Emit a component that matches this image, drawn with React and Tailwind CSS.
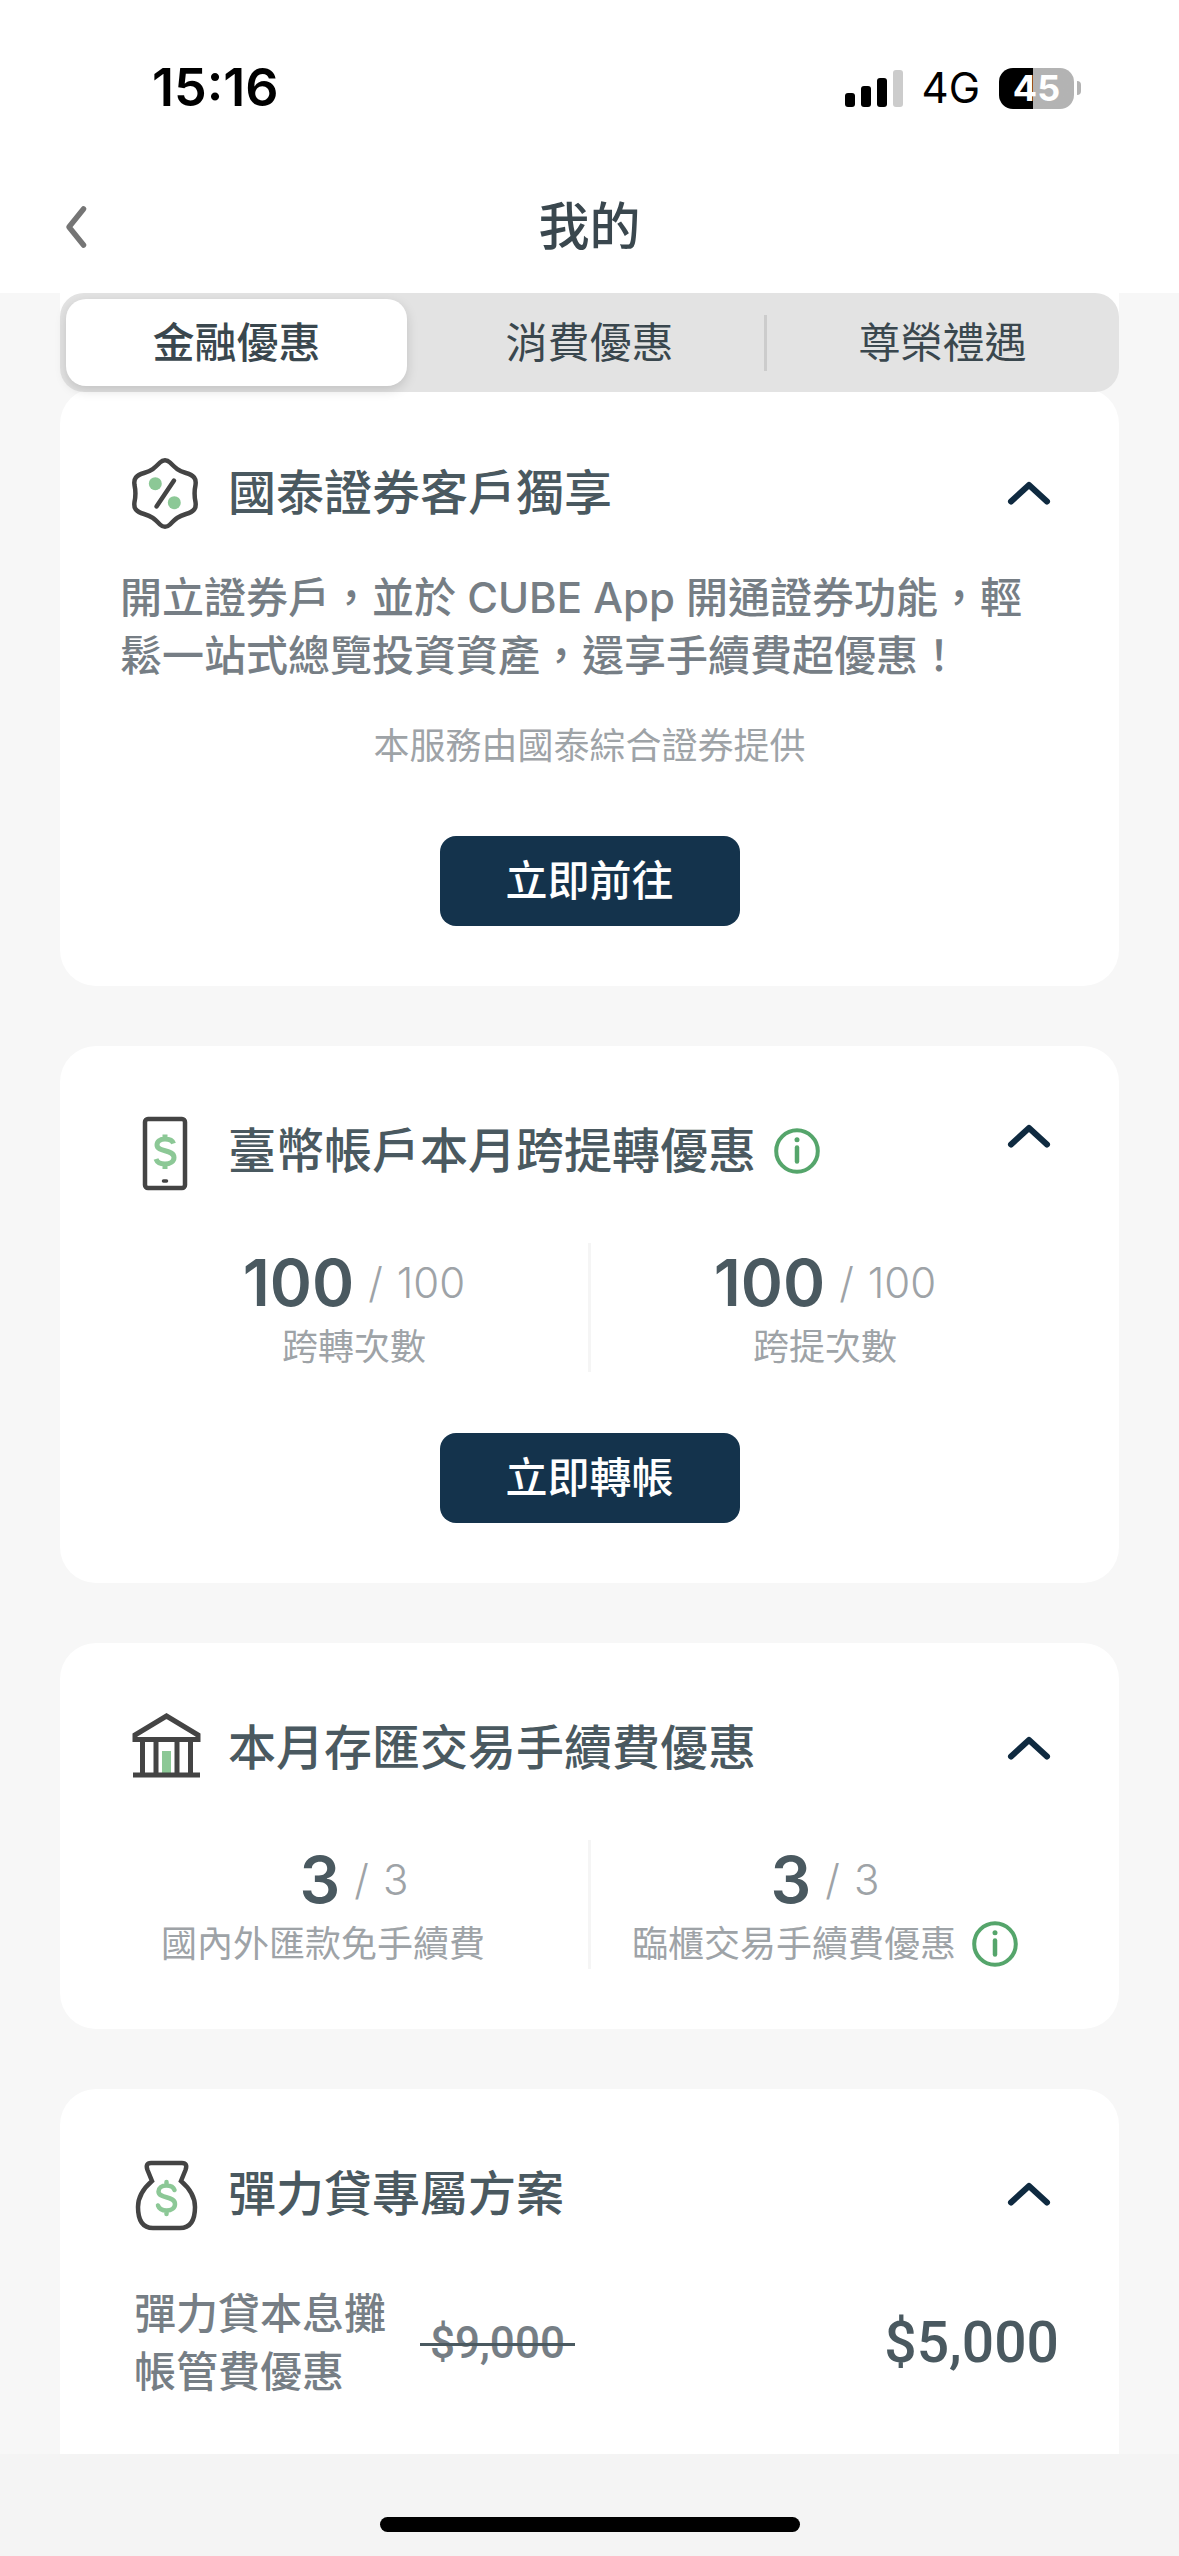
import { useState } from "react";

const FONT = "font-['Inter','Noto_Sans_CJK_TC',sans-serif]";

const tabs = ["金融優惠", "消費優惠", "尊榮禮遇"];

/* ICONS */
function PercentIcon() {
  return (
    <svg width="74" height="74" viewBox="0 0 74 74" fill="none" aria-hidden="true">
      <path
        d="M32 6.5C35 3.5 39 3.5 42 6.5C48 12.5 50 14.5 58 17C66 19.5 68.5 22.5 67.5 29C66 36 66 39 67.5 46C68.5 52.5 66 55.5 58 58C50 60.5 48 62.5 42 68.5C39 71.5 35 71.5 32 68.5C26 62.5 24 60.5 16 58C8 55.5 5.5 52.5 6.5 46C8 39 8 36 6.5 29C5.5 22.5 8 19.5 16 17C24 14.5 26 12.5 32 6.5Z"
        stroke="#444444"
        strokeWidth="4.5"
        strokeLinejoin="round"
      />
      <circle cx="27.3" cy="27.7" r="6.5" fill="#8cc896" />
      <circle cx="46.3" cy="46.7" r="6.5" fill="#8cc896" />
      <path d="M46 24.5L28.5 50.5" stroke="#444444" strokeWidth="4.5" strokeLinecap="round" />
    </svg>
  );
}

function PhoneIcon() {
  return (
    <svg width="74" height="74" viewBox="0 0 74 74" fill="none" aria-hidden="true" className="overflow-visible">
      <rect x="17" y="5" width="40" height="69" rx="3" stroke="#444444" strokeWidth="4.5" />
      <path
        d="M45.5 29.5C44.5 26.5 41.5 25 37 25C32 25 29 27.5 29 31C29 38.5 46 35 46 43.5C46 47.5 42 50 37 50C32 50 29 48 28 45M37 20.5V25M37 50V55"
        stroke="#8cc896"
        strokeWidth="5"
      />
      <path d="M35.5 67H38.5" stroke="#444444" strokeWidth="3.5" strokeLinecap="round" />
    </svg>
  );
}

function BankIcon() {
  return (
    <svg width="74" height="74" viewBox="0 0 74 74" fill="none" aria-hidden="true">
      <path d="M7 28.5V24L38.5 5L70 24V28.5Z" stroke="#444444" strokeWidth="5" />
      <path d="M14.5 29V65M28 29V65M49 29V65M62.5 29V65" stroke="#444444" strokeWidth="5" />
      <rect x="34" y="40" width="9" height="22" fill="#8cc896" />
      <path d="M5 64H72" stroke="#444444" strokeWidth="5" />
    </svg>
  );
}

function MoneyBagIcon() {
  return (
    <svg width="74" height="74" viewBox="0 0 74 74" fill="none" aria-hidden="true">
      <path
        d="M24 24L19.5 13Q17 6 23 6H54Q60 6 57.5 13L53 24Q67 36 67 50Q67 71 52 71H25Q10 71 10 50Q10 36 24 24Z"
        stroke="#444444"
        strokeWidth="4.5"
      />
      <path
        d="M46.5 33C45.5 30 42.5 28.5 38.5 28.5C33.5 28.5 30.5 31 30.5 34.5C30.5 42 47 38.5 47 47C47 51 43.5 53.5 38.5 53.5C34 53.5 31 51.5 30 48.5M38.5 25V28.5M38.5 53.5V57"
        stroke="#8cc896"
        strokeWidth="4.5"
        strokeLinecap="round"
      />
    </svg>
  );
}

function InfoButton({ label }) {
  return (
    <button type="button" aria-label={label} className="shrink-0 cursor-pointer">
      <svg width="46" height="46" viewBox="0 0 46 46" fill="none">
        <circle cx="23" cy="23" r="20.8" stroke="#55a56b" strokeWidth="4" />
        <circle cx="23" cy="11.8" r="2.5" fill="#55a56b" />
        <path d="M23 19.5V33.5" stroke="#55a56b" strokeWidth="4.5" strokeLinecap="round" />
      </svg>
    </button>
  );
}

function StatusBar() {
  return (
    <div className="flex items-center justify-between pt-14 pr-24.5 pl-38 text-black">
      <span className="text-[52px] leading-16 font-semibold">15:16</span>
      <div className="flex items-center gap-[19px]">
        <svg width="58" height="38" viewBox="0 0 58 38" aria-hidden="true">
          <rect x="0" y="24" width="10" height="14" rx="3" />
          <rect x="16" y="17" width="10" height="21" rx="3" />
          <rect x="32" y="9" width="10" height="29" rx="3" />
          <rect x="48" y="1" width="10" height="37" rx="3" fill="#cccccc" />
        </svg>
        <span className="text-[42px] leading-12">4G</span>
        <div className="flex items-center gap-[3px]">
          <div className="flex h-[41px] w-[75px] items-center justify-center rounded-[14px] bg-linear-to-r from-black from-45% to-[#b3b3b3] to-45% text-4xl leading-10 font-bold text-white">
            45
          </div>
          <div className="h-3.5 w-1 rounded-r-full bg-[#b3b3b3]" />
        </div>
      </div>
    </div>
  );
}

function Card({ icon, title, info, raised, children }) {
  const [open, setOpen] = useState(true);

  return (
    <section className="rounded-[36px] bg-white px-15 pt-17 pb-15">
      <div className="flex items-center px-2">
        {icon}
        <h2 className="ml-6.5 text-5xl leading-16 font-medium text-[#4a5960]">{title}</h2>
        {info && (
          <div className="ml-4.5 flex">
            <InfoButton label={title} />
          </div>
        )}
        <button
          type="button"
          aria-label={title}
          aria-expanded={open}
          onClick={() => setOpen(!open)}
          className={`ml-auto cursor-pointer ${raised ? "self-start" : ""}`}
        >
          <svg width="44" height="44" viewBox="0 0 44 44" fill="none" className={open ? "" : "rotate-180"}>
            <path d="M4 30.5L22 14L40 30.5" stroke="#0f2a40" strokeWidth="6" strokeLinecap="round" strokeLinejoin="round" />
          </svg>
        </button>
      </div>
      {open && children}
    </section>
  );
}

function Stat({ used, total, label, info, infoSlot }) {
  return (
    <div className="flex flex-1 flex-col items-center">
      <div className="flex items-center gap-3.5 text-[42px] leading-[79px] font-light text-[#9ea3a7]">
        <span className="text-[64px] font-semibold text-[#4a5960]">{used}</span>
        <span>/</span>
        <span>{total}</span>
      </div>
      <div className="flex items-center gap-4 text-4xl leading-[50px] whitespace-nowrap text-[#9ea3a7]">
        {label}
        {info && <InfoButton label={label} />}
        {infoSlot && <div className="w-11.5" />}
      </div>
    </div>
  );
}

function Stats({ items }) {
  return (
    <div className="mt-[55px] flex divide-x-3 divide-[#f5f5f5]">
      {items.map((item) => (
        <Stat key={item.label} {...item} />
      ))}
    </div>
  );
}

function PrimaryButton({ children }) {
  return (
    <button
      type="button"
      className="mx-auto mt-[61px] block h-[90px] w-75 cursor-pointer rounded-2xl bg-[#14334c] text-[42px] leading-15 font-medium text-white"
    >
      {children}
    </button>
  );
}

function App() {
  const [activeTab, setActiveTab] = useState(0);

  return (
    <div className={`flex h-screen flex-col bg-[#f7f7f7] ${FONT}`}>
      {/* HEADER */}
      <header className="bg-white">
        <StatusBar />
        <div className="flex h-[173px] items-center justify-between px-15 pt-16 pb-6">
          <button type="button" aria-label="返回" className="cursor-pointer">
            <svg width="32" height="48" viewBox="0 0 32 48" fill="none">
              <path d="M23.5 6L9 24L23.5 42" stroke="#757575" strokeWidth="5.5" strokeLinecap="round" strokeLinejoin="round" />
            </svg>
          </button>
          <h1 className="text-[51px] leading-16 font-medium text-[#3a474e]">我的</h1>
          <div className="w-8" />
        </div>
      </header>

      <main className="flex-1 overflow-y-auto px-15 [scrollbar-width:none]">
        {/* TABS */}
        <div className="sticky top-0 z-10 bg-linear-to-b from-white from-50% to-transparent to-50%">
          <div role="tablist" className="flex h-[99px] rounded-3xl bg-[#e3e3e3]">
            {tabs.map((tab, idx) => (
              <div key={tab} className="flex flex-1 items-center">
                <button
                  type="button"
                  role="tab"
                  aria-selected={activeTab === idx}
                  onClick={() => setActiveTab(idx)}
                  className={`mx-1.5 h-[87px] flex-1 cursor-pointer rounded-[20px] text-[42px] leading-15 text-[#3a474e] ${
                    activeTab === idx ? "bg-white font-medium shadow-[0_4px_12px_rgba(0,0,0,0.15)]" : ""
                  }`}
                >
                  {tab}
                </button>
                {idx === 1 && <div className="-mr-px -ml-0.5 h-14 w-[3px] bg-[#cccccc]" />}
              </div>
            ))}
          </div>
        </div>

        {/* CARDS */}
        <div className="-mt-1 flex flex-col gap-15">
          <Card icon={<PercentIcon />} title="國泰證券客戶獨享">
            <p className="mt-[39px] text-[42px] leading-[58px] font-medium text-[#767e85]">
              開立證券戶，並於 CUBE App 開通證券功能，輕鬆一站式總覽投資資產，還享手續費超優惠！
            </p>
            <p className="mt-8 text-center text-4xl leading-[58px] text-[#9ea3a7]">本服務由國泰綜合證券提供</p>
            <PrimaryButton>立即前往</PrimaryButton>
          </Card>

          <Card icon={<PhoneIcon />} title="臺幣帳戶本月跨提轉優惠" info raised>
            <Stats
              items={[
                { used: 100, total: 100, label: "跨轉次數" },
                { used: 100, total: 100, label: "跨提次數" }
              ]}
            />
            <PrimaryButton>立即轉帳</PrimaryButton>
          </Card>

          <Card icon={<BankIcon />} title="本月存匯交易手續費優惠">
            <Stats
              items={[
                { used: 3, total: 3, label: "國內外匯款免手續費", infoSlot: true },
                { used: 3, total: 3, label: "臨櫃交易手續費優惠", info: true }
              ]}
            />
          </Card>

          <Card icon={<MoneyBagIcon />} title="彈力貸專屬方案">
            <div className="mt-13.5 mb-15 flex items-center pl-3.5 text-[42px] leading-[58px] font-medium text-[#767e85]">
              <span>
                彈力貸本息攤
                <br />
                帳管費優惠
              </span>
              <s className="relative ml-8.5 px-2.5 font-['Roboto',sans-serif] text-[44px] no-underline">
                $9,000
                <span className="absolute inset-x-0 top-1/2 h-[3px] bg-[#4a5960]" />
              </s>
              <span className="ml-auto font-['Roboto',sans-serif] text-[57px] text-[#4a5960]">$5,000</span>
            </div>
          </Card>
        </div>
      </main>

      {/* HOME INDICATOR */}
      <footer className="flex h-[102px] items-end justify-center bg-[#f4f4f4] pb-6">
        <div className="h-[15px] w-105 rounded-full bg-black" />
      </footer>
    </div>
  );
}

export default App;
